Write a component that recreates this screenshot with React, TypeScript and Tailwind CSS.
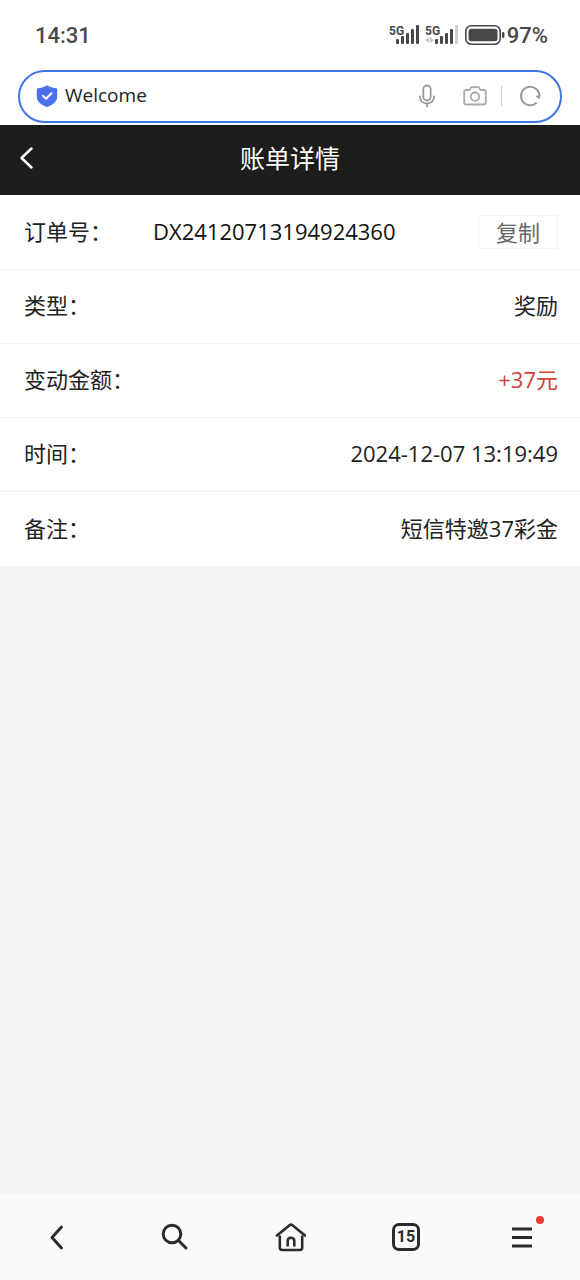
import React from 'react';

interface BillRowProps {
  label: string;
  children: React.ReactNode;
}

const BillRow: React.FC<BillRowProps> = ({ label, children }) => {
  return (
    <div className="flex h-[74px] items-center justify-between border-b border-[#f3f3f3] pr-[22px] pb-[2px] pl-6 last:border-b-0">
      <dt className="text-[#222]">{label}</dt>
      {children}
    </div>
  );
};

const SignalIcon = ({ weak = false }: { weak?: boolean }) => (
  <svg className="h-6 w-8 overflow-visible" viewBox="0 0 32 24" fill="#484848" role="img" aria-label="5G">
    <text x="0" y="12" fontSize="12" fontWeight="700" fontFamily="Roboto, sans-serif">
      5G
    </text>
    {weak ? (
      <>
        <path d="M4 14 L0 17 L4 20Z M5 14 L9 17 L5 20Z" fill="#c8c8c8" />
        <rect x="10" y="16" width="3" height="5" rx="1" />
        <rect x="15" y="13" width="3" height="8" rx="1" />
        <rect x="20" y="10" width="3" height="11" rx="1" />
        <rect x="25" y="6" width="3" height="15" rx="1" />
        <rect x="30" y="2" width="3" height="19" rx="1" fill="#d0d0d0" />
      </>
    ) : (
      <>
        <rect x="7" y="16" width="3" height="5" rx="1" />
        <rect x="12" y="13" width="3" height="8" rx="1" />
        <rect x="17" y="10" width="3" height="11" rx="1" />
        <rect x="22" y="6" width="3" height="15" rx="1" />
        <rect x="27" y="2" width="3" height="19" rx="1" />
      </>
    )}
  </svg>
);

const StatusBar = () => (
  <div className="flex h-[70px] items-center justify-between bg-white pr-8 pl-[35px] text-[22px] font-medium text-[#484848]">
    <span>14:31</span>
    <div className="flex items-center gap-1">
      <SignalIcon />
      <SignalIcon weak />
      <svg className="ml-1 h-5 w-10" viewBox="0 0 40 20" fill="none" role="img" aria-label="电量">
        <rect x="0.8" y="0.8" width="34.4" height="18.4" rx="5.5" stroke="#484848" strokeWidth="1.6" />
        <rect x="3.5" y="3.7" width="29" height="12.6" rx="3" fill="#484848" />
        <rect x="37" y="7" width="2.4" height="6" rx="1" fill="#484848" />
      </svg>
      <span className="-ml-[2px]">97%</span>
    </div>
  </div>
);

const AddressBar = () => (
  <div className="bg-white px-[18px] pb-[2px]">
    <form className="flex h-[53px] items-center rounded-full border-2 border-[#3f76e4] bg-white pr-[18px] pb-[2px] pl-[15px]">
      <svg className="h-6 w-6 shrink-0" viewBox="0 0 24 24" fill="none" aria-hidden="true">
        <path
          d="M12 1.2 C15 3 18 4 21.4 4.3 Q22.2 4.5 22.2 5.4 V13 C22.2 18 17.5 20.8 12 23 C6.5 20.8 1.8 18 1.8 13 V5.4 Q1.8 4.5 2.6 4.3 C6 4 9 3 12 1.2Z"
          fill="#4a70ee"
        />
        <path d="M7.8 11.8 L11 14.7 L16.5 9.2" stroke="#fff" strokeWidth="2" strokeLinecap="round" strokeLinejoin="round" />
      </svg>
      <input
        className="ml-[6px] min-w-0 flex-1 bg-transparent font-['Open_Sans',sans-serif] text-[19px] text-[#222] outline-none"
        type="text"
        aria-label="地址栏"
        defaultValue="Welcome"
      />
      <button type="button" aria-label="语音" className="mr-[26px]">
        <svg className="h-6 w-5" viewBox="0 0 20 24" fill="none" stroke="#999" strokeWidth="1.8" strokeLinecap="round">
          <rect x="6.3" y="1.5" width="7.4" height="15" rx="3.7" />
          <path d="M3 12.5 C3 17 6 19.5 10 19.5 C14 19.5 17 17 17 12.5 M10 19.5 V22.5" />
        </svg>
      </button>
      <button type="button" aria-label="拍照" className="mr-[14px]">
        <svg className="h-6 w-6" viewBox="0 0 24 24" fill="none" stroke="#aaa" strokeWidth="1.8" strokeLinejoin="round">
          <path d="M3.5 6 H6 Q7 6 7.3 5 L7.7 4 Q8 3.2 9 3.2 H15 Q16 3.2 16.3 4 L16.7 5 Q17 6 18 6 H20.5 Q22.8 6 22.8 8.3 V18.2 Q22.8 20.5 20.5 20.5 H3.5 Q1.2 20.5 1.2 18.2 V8.3 Q1.2 6 3.5 6Z" />
          <circle cx="12" cy="12.7" r="4.2" />
        </svg>
      </button>
      <span className="h-5 w-px bg-[#ccc]" />
      <button type="button" aria-label="刷新" className="ml-4">
        <svg className="h-6 w-6" viewBox="0 0 24 24" fill="none" stroke="#999" strokeWidth="2" strokeLinecap="round">
          <path d="M18 19.2 A9.2 9.2 0 1 1 21.4 12.5" />
          <path d="M17.6 12 L21.2 15.6 L22.4 11Z" fill="#999" stroke="none" />
        </svg>
      </button>
    </form>
  </div>
);

const HeaderBar = ({ title }: { title: string }) => (
  <header className="grid h-[70px] grid-cols-[52px_1fr_52px] items-center bg-[#1d1d1d] text-white">
    <button type="button" aria-label="返回" className="flex justify-center pb-1">
      <svg className="h-6 w-4" viewBox="0 0 16 24" fill="none" stroke="#fff" strokeWidth="2.5" strokeLinecap="round" strokeLinejoin="round">
        <path d="M13.5 2.5 L3.5 12 L13.5 21.5" />
      </svg>
    </button>
    <h1 className="text-center text-[25px]">{title}</h1>
  </header>
);

const BottomNav = () => (
  <nav className="grid h-[86px] grid-cols-5 items-center bg-[#fafafa] text-[#2b2b2b]">
    <button type="button" aria-label="后退" className="flex justify-center">
      <svg className="h-8 w-8" viewBox="0 0 32 32" fill="none" stroke="currentColor" strokeWidth="3" strokeLinecap="round" strokeLinejoin="round">
        <path d="M19.5 6 L10 16.5 L19.5 27" />
      </svg>
    </button>
    <button type="button" aria-label="搜索" className="flex justify-center">
      <svg className="h-8 w-8" viewBox="0 0 32 32" fill="none" stroke="currentColor" strokeWidth="3" strokeLinecap="round">
        <circle cx="14" cy="13" r="8.800" />
        <path d="M20.5 19.5 L28 27" />
      </svg>
    </button>
    <button type="button" aria-label="主页" className="flex justify-center">
      <svg className="h-8 w-8" viewBox="0 0 32 32" fill="none" stroke="currentColor" strokeWidth="2.6" strokeLinecap="round" strokeLinejoin="round">
        <path d="M3 14.5 L15.5 4.2 Q17 3.1 18.5 4.2 L31 14.5" />
        <path d="M5.8 15.5 V26.5 Q5.8 29 8.3 29 H25.7 Q28.2 29 28.2 26.5 V15.5" />
        <path d="M13.7 24.4 V20 Q13.7 16.8 17 16.8 Q20.3 16.8 20.3 20 V24.4" />
      </svg>
    </button>
    <button type="button" aria-label="15 个标签页" className="flex justify-center">
      <span className="flex h-7 w-7 items-center justify-center rounded-[7px] border-[3px] border-current text-base font-bold">
        15
      </span>
    </button>
    <button type="button" aria-label="菜单" className="flex justify-center">
      <span className="relative">
        <svg className="h-8 w-8" viewBox="0 0 32 32" fill="none" stroke="currentColor" strokeWidth="3">
          <path d="M6 8 H26 M6 16.5 H26 M6 25 H26" />
        </svg>
        <span className="absolute -top-[5px] -right-[6px] h-2 w-2 rounded-full bg-[#e93b36]" />
      </span>
    </button>
  </nav>
);

const App: React.FC = () => {
  return (
    <div className="flex min-h-screen flex-col bg-[#f3f3f3] font-[Roboto,'Noto_Sans_CJK_SC',sans-serif]">
      <StatusBar />
      <AddressBar />
      <HeaderBar title="账单详情" />
      <main className="flex-1">
        <dl className="bg-white pt-px font-['Open_Sans','Noto_Sans_CJK_SC',sans-serif] text-[22px] text-[#222]">
          <BillRow label="订单号：">
            <dd className="flex flex-1 items-center justify-between pl-[41px]">
              <span className="text-[#111]">DX24120713194924360</span>
              <button type="button" className="h-[34px] w-20 border border-[#f3f3f3] leading-7 text-[#666]">
                复制
              </button>
            </dd>
          </BillRow>
          <BillRow label="类型：">
            <dd>奖励</dd>
          </BillRow>
          <BillRow label="变动金额：">
            <dd className="text-[#cb4535]">+37元</dd>
          </BillRow>
          <BillRow label="时间：">
            <dd>2024-12-07 13:19:49</dd>
          </BillRow>
          <BillRow label="备注：">
            <dd>短信特邀37彩金</dd>
          </BillRow>
        </dl>
      </main>
      <BottomNav />
    </div>
  );
};

export default App;
